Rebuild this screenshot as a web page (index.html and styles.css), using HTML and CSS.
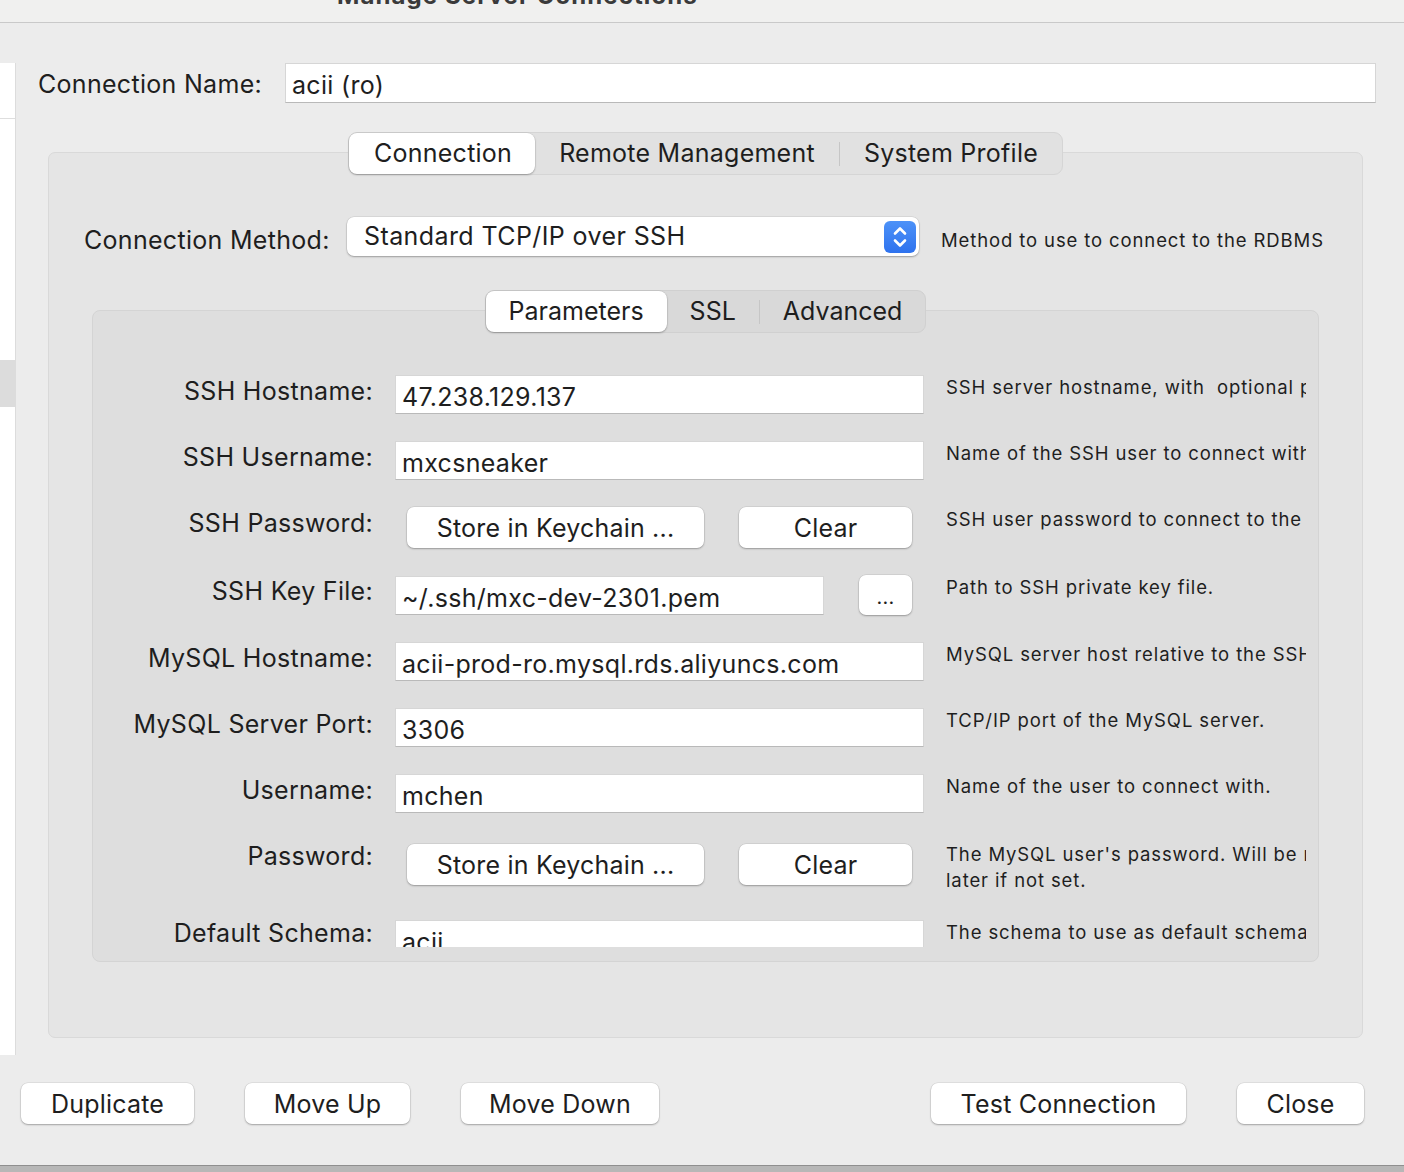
FILE: index.html
```html
<!DOCTYPE html>
<html lang="en">
<head>
<meta charset="utf-8">
<title>Manage Server Connections</title>
<link rel="stylesheet" href="styles.css">
</head>
<body>
<header class="titlebar"><span class="title">Manage Server Connections</span></header>
<div class="window">
  <aside class="sidebar">
    <div class="sb-row"></div>
    <div class="sb-row sel"></div>
  </aside>
  <main class="main">
    <div class="name-row">
      <span class="name-label">Connection Name:</span>
      <div class="field name-field">acii (ro)</div>
    </div>
    <section class="group outer">
      <div class="seg outer-seg">
        <span class="seg-item active">Connection</span>
        <span class="seg-item">Remote Management</span>
        <span class="seg-sep"></span>
        <span class="seg-item">System Profile</span>
      </div>
      <div class="method-row">
        <span class="method-label">Connection Method:</span>
        <div class="select">
          <span class="select-text">Standard TCP/IP over SSH</span>
          <span class="stepper">
            <svg width="32" height="32" viewBox="0 0 32 32"><path d="M11 12.5 L16 7.5 L21 12.5 M11 19.5 L16 24.5 L21 19.5" fill="none" stroke="#fff" stroke-width="2.6" stroke-linecap="round" stroke-linejoin="round"/></svg>
          </span>
        </div>
        <span class="desc">Method to use to connect to the RDBMS</span>
      </div>
      <section class="group inner">
        <div class="seg inner-seg">
          <span class="seg-item active">Parameters</span>
          <span class="seg-item">SSL</span>
          <span class="seg-sep"></span>
          <span class="seg-item">Advanced</span>
        </div>
        <div class="viewport">
          <div class="form">
            <div class="row">
              <span class="label">SSH Hostname:</span>
              <div class="field">47.238.129.137</div>
              <span class="desc">SSH server hostname, with&nbsp; optional port number.</span>
            </div>
            <div class="row">
              <span class="label">SSH Username:</span>
              <div class="field">mxcsneaker</div>
              <span class="desc">Name of the SSH user to connect with.</span>
            </div>
            <div class="row">
              <span class="label">SSH Password:</span>
              <div class="btns">
                <button class="btn keychain">Store in Keychain ...</button>
                <button class="btn clear">Clear</button>
              </div>
              <span class="desc">SSH user password to connect to the SSH tunnel.</span>
            </div>
            <div class="row">
              <span class="label">SSH Key File:</span>
              <div class="btns key">
                <div class="field keyfile">~/.ssh/mxc-dev-2301.pem</div>
                <button class="btn dots">...</button>
              </div>
              <span class="desc">Path to SSH private key file.</span>
            </div>
            <div class="row">
              <span class="label">MySQL Hostname:</span>
              <div class="field">acii-prod-ro.mysql.rds.aliyuncs.com</div>
              <span class="desc">MySQL server host relative to the SSH server.</span>
            </div>
            <div class="row">
              <span class="label">MySQL Server Port:</span>
              <div class="field">3306</div>
              <span class="desc">TCP/IP port of the MySQL server.</span>
            </div>
            <div class="row">
              <span class="label">Username:</span>
              <div class="field">mchen</div>
              <span class="desc">Name of the user to connect with.</span>
            </div>
            <div class="row pw">
              <span class="label">Password:</span>
              <div class="btns">
                <button class="btn keychain">Store in Keychain ...</button>
                <button class="btn clear">Clear</button>
              </div>
              <span class="desc wrap"><span class="line">The MySQL user's password. Will be requested</span><span class="line">later if not set.</span></span>
            </div>
            <div class="row last">
              <span class="label">Default Schema:</span>
              <div class="field">acii</div>
              <span class="desc">The schema to use as default schema. Leave blank to select it later.</span>
            </div>
          </div>
        </div>
      </section>
    </section>
  </main>
</div>
<footer class="footer">
  <div class="fgroup">
    <button class="btn fbtn dup">Duplicate</button>
    <button class="btn fbtn up">Move Up</button>
    <button class="btn fbtn down">Move Down</button>
  </div>
  <div class="fgroup">
    <button class="btn fbtn test">Test Connection</button>
    <button class="btn fbtn close">Close</button>
  </div>
</footer>
<div class="bottom-edge"></div>
</body>
</html>
```
FILE: styles.css
```css
* { box-sizing: border-box; }
html, body { margin: 0; padding: 0; }
body {
  width: 1404px;
  height: 1172px;
  overflow: hidden;
  background: #ececec;
  font-family: Inter, "Liberation Sans", sans-serif;
  color: #1e1e1e;
}
.titlebar {
  height: 23px;
  background: #f0f0ef;
  border-bottom: 1px solid #c9c9c9;
  overflow: hidden;
}
.title {
  display: block;
  margin-top: -16px;
  padding-left: 337px;
  font-size: 24px;
  line-height: 24px;
  font-weight: 700;
  letter-spacing: 1.1px;
  color: #3a3a3a;
}
.window {
  display: flex;
  align-items: flex-start;
}
.sidebar {
  width: 16px;
  height: 992px;
  margin-top: 40px;
  background: #fff;
  border-right: 1px solid #dcdcdc;
}
.sb-row {
  height: 56px;
  border-bottom: 1px solid #dedede;
}
.sb-row.sel {
  height: 47px;
  margin-top: 241px;
  border-bottom: 0;
  background: #dcdcdc;
}
.main {
  flex: 1;
  padding: 40px 28px 0 22px;
}
.name-row {
  display: flex;
  align-items: center;
}
.name-label {
  width: 247px;
  font-size: 25px;
  letter-spacing: 0.3px;
  margin-top: 2px;
}
.field {
  height: 39px;
  background: #fff;
  border: 1px solid #d6d6d6;
  border-bottom-color: #b9b9b9;
  font-size: 25px;
  line-height: 43px;
  letter-spacing: 0.3px;
  padding-left: 6px;
  white-space: nowrap;
  overflow: hidden;
}
.name-field {
  flex: 1;
  height: 40px;
  line-height: 42px;
}
.group {
  border: 1px solid #d9d9d9;
  border-radius: 7px;
}
.outer {
  margin: 49px 13px 0 10px;
  background: #e5e5e5;
  padding-bottom: 75px;
}
.seg {
  display: flex;
  align-items: center;
  width: max-content;
  margin: -21px auto 0;
  height: 43px;
  border: 1px solid #d5d5d5;
  border-radius: 9px;
  background: #e1e1e1;
  font-size: 25px;
}
.seg-item {
  height: 41px;
  line-height: 41px;
  padding: 0 24px;
  border-radius: 8px;
  letter-spacing: 0.25px;
}
.outer-seg .seg-item.active { padding: 0 23px 0 25px; }
.inner-seg .seg-item {
  letter-spacing: 0;
  padding: 0 23px;
}
.seg-item.active {
  background: #fff;
  box-shadow: 0 1px 2px rgba(0,0,0,.28), 0 0 0 0.5px rgba(0,0,0,.08);
}
.seg-sep {
  width: 1px;
  height: 24px;
  background: #c6c6c6;
}
.method-row {
  display: flex;
  align-items: center;
  margin-top: 42px;
  padding-left: 35px;
}
.method-label {
  width: 263px;
  font-size: 25px;
  letter-spacing: 0.3px;
  margin-top: 6px;
}
.select {
  width: 572px;
  height: 39px;
  background: #fff;
  border-radius: 7px;
  box-shadow: 0 1px 2px rgba(0,0,0,.28), 0 0 0 0.5px rgba(0,0,0,.1);
  display: flex;
  align-items: center;
  justify-content: space-between;
  padding: 0 3px 0 17px;
}
.select-text {
  font-size: 25px;
  letter-spacing: 0.4px;
  margin-top: -1px;
}
.stepper {
  width: 32px;
  height: 32px;
  border-radius: 6px;
  background: linear-gradient(#4d92f8, #2e72ee);
  display: block;
}
.stepper svg { display: block; }
.desc {
  font-size: 18.5px;
  line-height: 26px;
  letter-spacing: 0.88px;
  white-space: nowrap;
  overflow: hidden;
  color: #1e1e1e;
}
.method-row .desc { margin-left: 22px; margin-top: 6px; }
.inner {
  margin: 54px 43px 0 43px;
  background: #dedede;
  border-color: #d4d4d4;
  border-radius: 8px;
  padding-bottom: 14px;
}
.inner-seg {
  background: #d9d9d9;
  border-color: #d0d0d0;
}
.viewport {
  height: 602px;
  margin-top: 12px;
  overflow: hidden;
}
.form {
  display: flex;
  flex-direction: column;
  gap: 27px;
  padding-top: 30px;
}
.row {
  display: grid;
  grid-template-columns: 280px 529px 360px;
  column-gap: 22px;
  align-items: start;
}
.label {
  text-align: right;
  font-size: 25px;
  line-height: 30px;
  margin-top: 1px;
  letter-spacing: 0.3px;
}
.row.last .label { margin-top: -2px; }
.row .desc {
  margin-top: -1px;
}
.row.pw .btns { padding-top: 4px; }
.desc.wrap { display: flex; flex-direction: column; margin-top: 1px; }
.btns {
  display: flex;
  align-items: center;
  gap: 35px;
  padding-left: 12px;
}
.btns.key { padding-left: 0; }
.btn {
  height: 41px;
  background: #fff;
  border: 0;
  border-radius: 7px;
  box-shadow: 0 1px 2px rgba(0,0,0,.28), 0 0 0 0.5px rgba(0,0,0,.1);
  font-family: Inter, "Liberation Sans", sans-serif;
  font-size: 25px;
  letter-spacing: 0.2px;
  color: #1e1e1e;
  padding: 0;
}
.keychain { width: 297px; }
.clear { width: 173px; }
.keyfile { width: 429px; }
.dots { width: 53px; height: 40px; font-size: 20px; padding-top: 4px; }
.footer {
  display: flex;
  justify-content: space-between;
  padding: 28px 40px 41px 21px;
}
.fgroup {
  display: flex;
  gap: 51px;
}
.dup { width: 173px; }
.up { width: 165px; }
.down { width: 198px; }
.test { width: 255px; }
.close { width: 127px; }
.bottom-edge {
  height: 20px;
  border-top: 1px solid #8f8f8f;
  background: #b7b7b7;
}
```
